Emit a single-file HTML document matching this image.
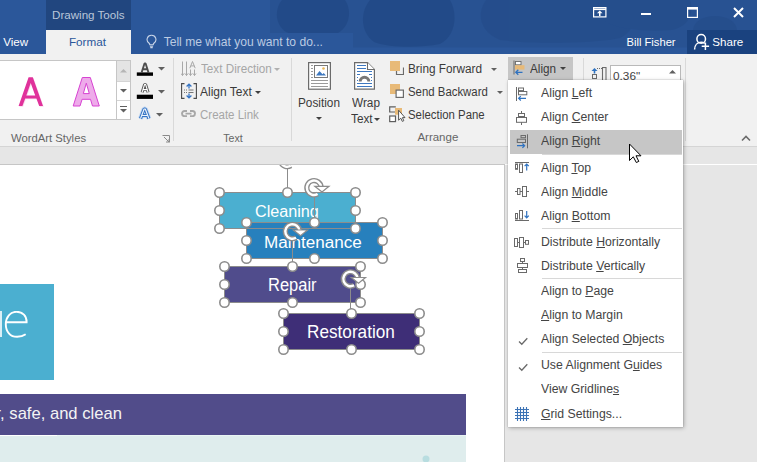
<!DOCTYPE html>
<html><head><meta charset="utf-8"><style>*{box-sizing:border-box;margin:0;padding:0}
html,body{width:757px;height:462px;overflow:hidden;background:#fff}
body{position:relative;font-family:"Liberation Sans",sans-serif;}
.a{position:absolute;white-space:nowrap}
u{text-decoration:underline;text-decoration-thickness:1px;text-underline-offset:1px}
</style></head><body>
<div class="a" style="left:0px;top:0px;width:757px;height:54px;background:#2b579a;"></div>
<svg class="a" style="left:0px;top:0px;" width="757" height="54" viewBox="0 0 757 54"><path d="M270 0H757V47.5H353V33H270Z" fill="#10254a" opacity="0.10"/><g fill="#163a72" opacity="0.3"><path d="M282 0H345C352 10 350 26 338 33C322 38 298 38 286 32C274 24 275 8 282 0Z"/><path d="M370 0H450C458 14 456 36 440 44C420 48 390 48 374 42C360 32 360 12 370 0Z"/></g><g fill="#163a72" opacity="0.16"><path d="M486 0H632C640 12 636 30 620 38C590 44 530 44 500 40C480 32 476 14 486 0Z"/><path d="M600 0H690C694 12 690 26 672 30C650 32 620 30 606 22C598 14 596 6 600 0Z"/><ellipse cx="715" cy="30" rx="22" ry="14"/></g></svg>
<div class="a" style="left:131px;top:33px;width:221px;height:15px;background:#2b579a;"></div>
<div class="a" style="left:46px;top:0px;width:85px;height:30px;background:#21467f;"></div>
<div class="a" style="left:51.75px;top:9.25px;font-size:11.63px;line-height:11.63px;color:#bac7da;transform:scaleX(0.9976);transform-origin:0 0;">Drawing Tools</div>
<div class="a" style="left:46px;top:30px;width:85px;height:24px;background:#f1f1f1;"></div>
<div class="a" style="left:68.94px;top:36.29px;font-size:11.70px;line-height:11.70px;color:#2b579a;">Format</div>
<div class="a" style="left:3.25px;top:36.38px;font-size:11.60px;line-height:11.60px;color:#ffffff;">View</div>
<svg class="a" style="left:146px;top:34px;" width="11" height="15" viewBox="0 0 11 15"><path d="M5.5 1.2a4.3 4.3 0 0 0-2.6 7.8c.6.5.9 1.1.9 1.8h3.4c0-.7.3-1.3.9-1.8A4.3 4.3 0 0 0 5.5 1.2z" fill="none" stroke="#c9d5e8" stroke-width="1.1"/><path d="M3.9 12.2h3.2M4.3 13.6h2.4" stroke="#c9d5e8" stroke-width="1.1"/></svg>
<div class="a" style="left:163.63px;top:36.25px;font-size:12.10px;line-height:12.10px;color:#bccbe2;">Tell me what you want to do...</div>
<svg class="a" style="left:593px;top:7px;" width="14" height="11" viewBox="0 0 14 11"><rect x="0.6" y="0.6" width="12.3" height="9.3" fill="none" stroke="#fff" stroke-width="1.2"/><path d="M0.6 2.3h12.3" stroke="#fff" stroke-width="1.6"/><path d="M6.75 9V5.5" stroke="#fff" stroke-width="1.5"/><path d="M4 6.3L6.75 3.6 9.5 6.3z" fill="#fff"/></svg>
<div class="a" style="left:641px;top:13px;width:10px;height:2px;background:#ffffff;"></div>
<svg class="a" style="left:687px;top:7px;" width="11" height="11" viewBox="0 0 11 11"><rect x="0.6" y="0.6" width="9.8" height="9.8" fill="none" stroke="#fff" stroke-width="1.2"/><path d="M0.6 1.8h9.8" stroke="#fff" stroke-width="1.6"/></svg>
<svg class="a" style="left:733px;top:7px;" width="11" height="11" viewBox="0 0 11 11"><path d="M1 1l9 9M10 1l-9 9" stroke="#fff" stroke-width="2"/></svg>
<div class="a" style="left:626.48px;top:36.52px;font-size:11.20px;line-height:11.20px;color:#ffffff;">Bill Fisher</div>
<div class="a" style="left:687px;top:30px;width:70px;height:24px;background:#1a427f;"></div>
<svg class="a" style="left:0px;top:0px;" width="757" height="54" viewBox="0 0 757 54"><circle cx="701.2" cy="38.9" r="4.3" fill="none" stroke="#fff" stroke-width="1.5"/><path d="M694.6 49.5c0-4.6 3-7.2 6.6-7.2 1.4 0 2.6.4 3.6 1" fill="none" stroke="#fff" stroke-width="1.5"/><path d="M705.4 42.6v7.4M701.7 46.3h7.4" stroke="#fff" stroke-width="1.5"/></svg>
<div class="a" style="left:712.27px;top:36.28px;font-size:11.60px;line-height:11.60px;color:#ffffff;">Share</div>
<div class="a" style="left:0px;top:54px;width:757px;height:92px;background:#f1f1f1;"></div>
<div class="a" style="left:0px;top:146px;width:757px;height:1px;background:#d5d5d5;"></div>
<div class="a" style="left:0px;top:147px;width:757px;height:17px;background:#e6e6e6;"></div>
<div class="a" style="left:0px;top:164px;width:505px;height:1px;background:#c6c6c6;"></div>
<div class="a" style="left:0px;top:60px;width:131px;height:60px;background:#ffffff;border:1px solid #c6c6c6;border-left:none"></div>
<div class="a" style="left:116px;top:61px;width:1px;height:58px;background:#c6c6c6;"></div>
<div class="a" style="left:117px;top:61px;width:13px;height:20px;background:#e4e4e4;"></div>
<div class="a" style="left:117px;top:81px;width:13px;height:1px;background:#d4d4d4;"></div>
<div class="a" style="left:117px;top:100px;width:13px;height:1px;background:#d4d4d4;"></div>
<svg class="a" style="left:120px;top:69px;" width="7" height="4" viewBox="0 0 7 4"><path d="M0 3.5L3.5 0 7 3.5z" fill="#b5b5b5"/></svg>
<svg class="a" style="left:120px;top:89px;" width="7" height="4" viewBox="0 0 7 4"><path d="M0 0h7L3.5 3.5z" fill="#606060"/></svg>
<svg class="a" style="left:120px;top:106px;" width="7" height="7" viewBox="0 0 7 7"><path d="M0 0.5h7" stroke="#606060" stroke-width="1"/><path d="M0 3h7L3.5 6.5z" fill="#606060"/></svg>
<svg class="a" style="left:0px;top:0px;" width="110" height="110" viewBox="0 0 110 110"><path fill-rule="evenodd" fill="#e0329b" d="M18.6 106L28.6 77.3H32.8L43 106H39.2L36.4 98.6H25.2L22.4 106ZM26.3 95.6L30.7 83L35.2 95.6Z" transform="translate(0.7 0.7)" opacity="0.18" /><path fill-rule="evenodd" fill="#e0329b" d="M18.6 106L28.6 77.3H32.8L43 106H39.2L36.4 98.6H25.2L22.4 106ZM26.3 95.6L30.7 83L35.2 95.6Z"/><path fill-rule="evenodd" fill="#eeabea" stroke="#d743d2" stroke-width="1" d="M73.2 106L82.3 77.5H90.3L99.3 106H92.5L90.5 99.3H82.1L80 106ZM83.3 93.6L86.3 83.2L89.3 93.6Z"/></svg>
<svg class="a" style="left:0px;top:0px;" width="160" height="125" viewBox="0 0 160 125"><path d="M141.7 72.2L144.5 63.5H145.6L148.4 72.2M142.9 69.3h4.3" fill="none" stroke="#4e4e4e" stroke-width="1.9" stroke-linejoin="bevel"/><rect x="136.8" y="72.4" width="16.2" height="3.4" fill="#000"/><path d="M142.1 92.4L144.6 84.4H145.6L148.1 92.4M143.3 89.6h3.6" fill="none" stroke="#555" stroke-width="3" stroke-linejoin="bevel"/><path d="M142.1 92.4L144.6 84.4H145.6L148.1 92.4M143.3 89.6h3.6" fill="none" stroke="#fff" stroke-width="1.1" stroke-linejoin="bevel"/><rect x="136.8" y="94.7" width="16.2" height="4.2" fill="#000"/><path d="M140.5 118.6L144.1 109H145.3L148.9 118.6M142.2 115.5h5" fill="none" stroke="#c6daf3" stroke-width="5" stroke-linejoin="bevel"/><path d="M140.5 118.6L144.1 109H145.3L148.9 118.6M142.2 115.5h5" fill="none" stroke="#3574c4" stroke-width="3.2" stroke-linejoin="bevel"/><path d="M140.5 118.6L144.1 109H145.3L148.9 118.6M142.2 115.5h5" fill="none" stroke="#eef4fb" stroke-width="1.2" stroke-linejoin="bevel"/></svg>
<svg class="a" style="left:158px;top:67px;" width="7" height="4" viewBox="0 0 7 4"><path d="M0 0h7L3.5 3.5z" fill="#606060"/></svg>
<svg class="a" style="left:158px;top:90px;" width="7" height="4" viewBox="0 0 7 4"><path d="M0 0h7L3.5 3.5z" fill="#606060"/></svg>
<svg class="a" style="left:156px;top:113px;" width="7" height="4" viewBox="0 0 7 4"><path d="M0 0h7L3.5 3.5z" fill="#606060"/></svg>
<div class="a" style="left:10.95px;top:132.73px;font-size:11.30px;line-height:11.30px;color:#666666;">WordArt Styles</div>
<svg class="a" style="left:162px;top:135px;" width="9" height="9" viewBox="0 0 9 9"><path d="M0.5 0.5h7v7" fill="none" stroke="#8a8a8a" stroke-width="1"/><path d="M2 2l5 5M4 7h3V4" fill="none" stroke="#8a8a8a" stroke-width="1"/></svg>
<div class="a" style="left:173px;top:58px;width:1px;height:83px;background:#d9d9d9;"></div>
<svg class="a" style="left:181px;top:61px;" width="16" height="16" viewBox="0 0 16 16"><g stroke="#a8a8a8" stroke-width="1" fill="none"><path d="M1.5 0.5v14M5.5 0.5v14M9.5 8.5v6M13.5 8.5v6"/><path d="M0 12.5l1.5 2 1.5-2M4 12.5l1.5 2 1.5-2M8 12.5l1.5 2 1.5-2M12 12.5l1.5 2 1.5-2"/><path d="M8.8 7.2L11.5 0.5 14.2 7.2M9.8 4.9h3.4"/></g></svg>
<div class="a" style="left:200.64px;top:61.62px;font-size:13.08px;line-height:13.08px;color:#a6a6a6;transform:scaleX(0.8944);transform-origin:0 0;">Text Direction</div>
<svg class="a" style="left:274px;top:68px;" width="6" height="3" viewBox="0 0 6 3"><path d="M0 0h6L3 3z" fill="#b0b0b0"/></svg>
<svg class="a" style="left:181px;top:83px;" width="16" height="16" viewBox="0 0 16 16"><g fill="none" stroke="#4a4a4a" stroke-width="1.1"><path d="M3.5 0.6H0.6v14.8H3.5M12.5 0.6h2.9v14.8H12.5"/></g><g stroke="#777" stroke-width="1"><path d="M3 7h1M5 7h1M7.5 7h5M3 9.5h1M5 9.5h1M7.5 9.5h5"/></g><g stroke="#3574c4" stroke-width="1.3" fill="none"><path d="M8 1.2v4.3M5.6 3.5L8 1.1l2.4 2.4M8 10.5v4.3M5.6 12.5L8 14.9l2.4-2.4"/></g></svg>
<div class="a" style="left:200.48px;top:84.62px;font-size:13.08px;line-height:13.08px;color:#3a3a3a;transform:scaleX(0.9173);transform-origin:0 0;">Align Text</div>
<svg class="a" style="left:255px;top:91px;" width="6" height="3" viewBox="0 0 6 3"><path d="M0 0h6L3 3z" fill="#404040"/></svg>
<svg class="a" style="left:181px;top:110px;" width="15" height="7" viewBox="0 0 15 7"><g fill="none" stroke="#a8a8a8" stroke-width="1.9"><path d="M6 1H3.6a2.6 2.6 0 0 0 0 5.2H6M9 1h2.4a2.6 2.6 0 0 1 0 5.2H9M4.5 3.6h6"/></g></svg>
<div class="a" style="left:199.92px;top:108.22px;font-size:13.08px;line-height:13.08px;color:#a6a6a6;transform:scaleX(0.8791);transform-origin:0 0;">Create Link</div>
<div class="a" style="left:223.26px;top:132.92px;font-size:10.60px;line-height:10.60px;color:#666666;">Text</div>
<div class="a" style="left:291px;top:58px;width:1px;height:83px;background:#d9d9d9;"></div>
<svg class="a" style="left:308px;top:62px;" width="24" height="28" viewBox="0 0 24 28"><rect x="0.6" y="0.6" width="21.8" height="26.6" fill="#fff" stroke="#6b6b6b" stroke-width="1.2"/><rect x="6.5" y="3.5" width="13" height="12" fill="#fff" stroke="#7a7a7a" stroke-width="1"/><path d="M8 13.5l3.5-4.5 3 3.2 1.2-1.3 2.3 2.6z" fill="#3d78c0"/><circle cx="15.5" cy="6.5" r="1.3" fill="#e8b658"/><g stroke="#9a9a9a" stroke-width="1"><path d="M3 3.5h2M3 6.5h2M3 9.5h2M3 12.5h2M3 15.5h2M3 18.5h17M3 21.5h17M3 24.5h17"/></g></svg>
<div class="a" style="left:298.03px;top:96.42px;font-size:13.08px;line-height:13.08px;color:#3a3a3a;transform:scaleX(0.9020);transform-origin:0 0;">Position</div>
<svg class="a" style="left:316px;top:117px;" width="6" height="3" viewBox="0 0 6 3"><path d="M0 0h6L3 3z" fill="#404040"/></svg>
<svg class="a" style="left:354px;top:62px;" width="21" height="28" viewBox="0 0 21 28"><path d="M0.6 0.6H13.5L20.4 7.5V27.2H0.6Z" fill="#fff" stroke="#6b6b6b" stroke-width="1.2"/><path d="M13.5 0.6V7.5H20.4" fill="#fff" stroke="#6b6b6b" stroke-width="1.1"/><g stroke="#3e78c0" stroke-width="1"><path d="M3 3.5h9M3 6.5h9M3 9.5h15M3 12.5h3M15 12.5h3M3 21.5h15M3 24.5h15"/><path d="M3 15.5h1M3 18.5h1M17 15.5h1M17 18.5h1"/></g><path d="M6.2 19.5a4.3 4.3 0 0 1 8.6 0" fill="none" stroke="#777" stroke-width="3"/></svg>
<div class="a" style="left:351.65px;top:96.42px;font-size:13.08px;line-height:13.08px;color:#3a3a3a;transform:scaleX(0.9020);transform-origin:0 0;">Wrap</div>
<div class="a" style="left:350.83px;top:112.32px;font-size:13.08px;line-height:13.08px;color:#3a3a3a;transform:scaleX(0.9020);transform-origin:0 0;">Text</div>
<svg class="a" style="left:374px;top:118px;" width="6" height="3" viewBox="0 0 6 3"><path d="M0 0h6L3 3z" fill="#404040"/></svg>
<svg class="a" style="left:390px;top:61px;" width="14" height="14" viewBox="0 0 14 14"><path d="M6.5 6.5v7h7v-7" fill="none" stroke="#6b6b6b" stroke-width="1.2"/><rect x="0" y="0" width="10" height="10" fill="#e8ba78"/></svg>
<div class="a" style="left:407.83px;top:61.62px;font-size:13.08px;line-height:13.08px;color:#3a3a3a;transform:scaleX(0.9020);transform-origin:0 0;">Bring Forward</div>
<svg class="a" style="left:491px;top:68px;" width="6" height="3" viewBox="0 0 6 3"><path d="M0 0h6L3 3z" fill="#606060"/></svg>
<svg class="a" style="left:390px;top:84px;" width="14" height="14" viewBox="0 0 14 14"><rect x="0" y="0" width="10" height="10" fill="#e8ba78"/><rect x="6.1" y="6.1" width="7.3" height="7.3" fill="#fff" stroke="#6b6b6b" stroke-width="1.2"/></svg>
<div class="a" style="left:408.28px;top:84.62px;font-size:13.08px;line-height:13.08px;color:#3a3a3a;transform:scaleX(0.8715);transform-origin:0 0;">Send Backward</div>
<svg class="a" style="left:497px;top:91px;" width="6" height="3" viewBox="0 0 6 3"><path d="M0 0h6L3 3z" fill="#606060"/></svg>
<svg class="a" style="left:0px;top:0px;" width="420" height="130" viewBox="0 0 420 130"><g fill="none" stroke="#5e5e5e" stroke-width="1.2"><path d="M395.8 106.8H389.7V112H395.8"/><rect x="389.7" y="116" width="5.8" height="5.6" fill="#fff"/></g><rect x="395" y="108" width="7" height="6.7" fill="#e8ba78"/><path d="M398.6 110.2V120.2L400.8 118.2L402.3 121.4L403.8 120.7L402.4 117.6H405Z" fill="#fff" stroke="#555" stroke-width="1" stroke-linejoin="round"/></svg>
<div class="a" style="left:408.28px;top:108.02px;font-size:13.08px;line-height:13.08px;color:#3a3a3a;transform:scaleX(0.8715);transform-origin:0 0;">Selection Pane</div>
<div class="a" style="left:417.38px;top:132.16px;font-size:11.50px;line-height:11.50px;color:#666666;">Arrange</div>
<div class="a" style="left:508px;top:57px;width:65px;height:24px;background:#c6c6c6;"></div>
<svg class="a" style="left:513px;top:60px;" width="13" height="16" viewBox="0 0 13 16"><path d="M1 0.5v14" stroke="#6b6b6b" stroke-width="1"/><rect x="2.5" y="1.5" width="5.5" height="3.3" fill="#fff" stroke="#6b6b6b" stroke-width="0.9"/><rect x="2" y="5.2" width="9.5" height="4.4" fill="#e8ba78"/><path d="M9.5 12.3H2.8M5.3 9.8L2.8 12.3l2.5 2.5" fill="none" stroke="#2f72c0" stroke-width="1.3"/></svg>
<div class="a" style="left:530.38px;top:61.62px;font-size:13.08px;line-height:13.08px;color:#3a3a3a;transform:scaleX(0.8944);transform-origin:0 0;">Align</div>
<svg class="a" style="left:560px;top:67px;" width="6" height="3" viewBox="0 0 6 3"><path d="M0 0h6L3 3z" fill="#404040"/></svg>
<div class="a" style="left:583px;top:58px;width:1px;height:83px;background:#d9d9d9;"></div>
<svg class="a" style="left:591px;top:67px;" width="16" height="14" viewBox="0 0 16 14"><path d="M3.5 6.5V3" stroke="#2f72c0" stroke-width="1.6"/><path d="M0.5 4L3.5 1 6.5 4z" fill="#2f72c0"/><rect x="1.5" y="7.5" width="4" height="4" fill="none" stroke="#6b6b6b" stroke-width="1"/><path d="M6 1.5h5" stroke="#6b6b6b" stroke-dasharray="1 1"/><rect x="11.5" y="0.5" width="3.5" height="13" fill="none" stroke="#6b6b6b" stroke-width="1.1"/></svg>
<div class="a" style="left:610px;top:65px;width:71px;height:20px;background:#ffffff;border:1px solid #b9b9b9"></div>
<div class="a" style="left:613.04px;top:71.11px;font-size:11.80px;line-height:11.80px;color:#444;">0.36&quot;</div>
<svg class="a" style="left:669px;top:70px;" width="7" height="4" viewBox="0 0 7 4"><path d="M0 3.5L3.5 0 7 3.5z" fill="#606060"/></svg>
<div class="a" style="left:685px;top:58px;width:1px;height:83px;background:#d9d9d9;"></div>
<svg class="a" style="left:741px;top:135px;" width="10" height="7" viewBox="0 0 10 7"><path d="M1 5.5L5 1.5 9 5.5" fill="none" stroke="#6b6b6b" stroke-width="1.6"/></svg>
<div class="a" style="left:504px;top:164px;width:1px;height:298px;background:#c6c6c6;"></div>
<div class="a" style="left:505px;top:165px;width:252px;height:297px;background:#e6e6e6;"></div>
<div class="a" style="left:0px;top:284px;width:54px;height:96px;background:#4bafd0;"></div>
<svg class="a" style="left:0px;top:310.5px;" width="30" height="28" viewBox="0 0 30 28"><path d="M1 0v26" stroke="#fff" stroke-width="1.6"/><path d="M6.3 11.3H26.6C26.8 4.8 22.6 0.8 16.6 0.8 10.3 0.8 5.8 6 5.8 13.2c0 7.4 4.4 12.6 11.3 12.6 3.5 0 6.3-1 8.6-2.6" fill="none" stroke="#fff" stroke-width="1.9"/></svg>
<div class="a" style="left:0px;top:394px;width:466px;height:41px;background:#514c8a;"></div>
<div class="a" style="left:-4.5px;top:406.44px;font-size:16.60px;line-height:16.60px;color:#f4f4f4;">r, safe, and clean</div>
<div class="a" style="left:0px;top:435px;width:466px;height:27px;background:#dfeded;"></div>
<div class="a" style="left:0px;top:435px;width:57px;height:1px;background:#ffffff;"></div>
<div class="a" style="left:57px;top:435px;width:409px;height:1px;background:#e9f4f4;"></div>
<svg class="a" style="left:422px;top:455px;" width="8" height="8" viewBox="0 0 8 8"><circle cx="4" cy="4" r="3.5" fill="#b8dde0"/></svg>
<div class="a" style="left:219px;top:192px;width:137px;height:36px;background:#4bafd0;"></div>
<div class="a" style="left:255.18px;top:203.09px;font-size:16.42px;line-height:16.42px;color:#ffffff;transform:scaleX(0.9863);transform-origin:0 0;">Cleaning</div>
<div class="a" style="left:246px;top:222px;width:137px;height:36px;background:#2780bd;"></div>
<div class="a" style="left:264.4px;top:233.66px;font-size:17.30px;line-height:17.30px;color:#ffffff;transform:scaleX(0.9886);transform-origin:0 0;">Maintenance</div>
<div class="a" style="left:225px;top:266px;width:136px;height:36px;background:#504c8c;"></div>
<div class="a" style="left:268.35px;top:276.53px;font-size:17.44px;line-height:17.44px;color:#ffffff;transform:scaleX(0.9460);transform-origin:0 0;">Repair</div>
<div class="a" style="left:283px;top:313px;width:136px;height:36px;background:#3e2e77;"></div>
<div class="a" style="left:306.59px;top:323.89px;font-size:17.73px;line-height:17.73px;color:#ffffff;transform:scaleX(0.9700);transform-origin:0 0;">Restoration</div>
<svg class="a" style="left:0px;top:0px;" width="504" height="462" viewBox="0 0 504 462"><g fill="none" stroke="#8c8c8c" stroke-width="1"><rect x="219.5" y="192.5" width="136.0" height="36.0"/></g><g fill="none" stroke="#8c8c8c" stroke-width="1"><rect x="246.5" y="222.5" width="136.0" height="36.0"/></g><g fill="none" stroke="#8c8c8c" stroke-width="1"><rect x="224.5" y="266.5" width="136.0" height="36.0"/></g><g fill="none" stroke="#8c8c8c" stroke-width="1"><rect x="283.5" y="313.5" width="136.0" height="36.0"/></g><path d="M287.5 168V192.5M314.5 196V222.5M292.5 240V266.5M350.5 288V313.5" stroke="#8c8c8c" stroke-width="1"/><circle cx="219.5" cy="192.5" r="4.7" fill="#fff" stroke="#8c8c8c" stroke-width="1.6"/><circle cx="287.5" cy="192.5" r="4.7" fill="#fff" stroke="#8c8c8c" stroke-width="1.6"/><circle cx="355.5" cy="192.5" r="4.7" fill="#fff" stroke="#8c8c8c" stroke-width="1.6"/><circle cx="219.5" cy="210.5" r="4.7" fill="#fff" stroke="#8c8c8c" stroke-width="1.6"/><circle cx="355.5" cy="210.5" r="4.7" fill="#fff" stroke="#8c8c8c" stroke-width="1.6"/><circle cx="219.5" cy="228.5" r="4.7" fill="#fff" stroke="#8c8c8c" stroke-width="1.6"/><circle cx="355.5" cy="228.5" r="4.7" fill="#fff" stroke="#8c8c8c" stroke-width="1.6"/><circle cx="246.5" cy="222.5" r="4.7" fill="#fff" stroke="#8c8c8c" stroke-width="1.6"/><circle cx="314.5" cy="222.5" r="4.7" fill="#fff" stroke="#8c8c8c" stroke-width="1.6"/><circle cx="382.5" cy="222.5" r="4.7" fill="#fff" stroke="#8c8c8c" stroke-width="1.6"/><circle cx="246.5" cy="240.5" r="4.7" fill="#fff" stroke="#8c8c8c" stroke-width="1.6"/><circle cx="382.5" cy="240.5" r="4.7" fill="#fff" stroke="#8c8c8c" stroke-width="1.6"/><circle cx="246.5" cy="258.5" r="4.7" fill="#fff" stroke="#8c8c8c" stroke-width="1.6"/><circle cx="314.5" cy="258.5" r="4.7" fill="#fff" stroke="#8c8c8c" stroke-width="1.6"/><circle cx="382.5" cy="258.5" r="4.7" fill="#fff" stroke="#8c8c8c" stroke-width="1.6"/><circle cx="224.5" cy="266.5" r="4.7" fill="#fff" stroke="#8c8c8c" stroke-width="1.6"/><circle cx="292.5" cy="266.5" r="4.7" fill="#fff" stroke="#8c8c8c" stroke-width="1.6"/><circle cx="360.5" cy="266.5" r="4.7" fill="#fff" stroke="#8c8c8c" stroke-width="1.6"/><circle cx="224.5" cy="284.5" r="4.7" fill="#fff" stroke="#8c8c8c" stroke-width="1.6"/><circle cx="360.5" cy="284.5" r="4.7" fill="#fff" stroke="#8c8c8c" stroke-width="1.6"/><circle cx="224.5" cy="302.5" r="4.7" fill="#fff" stroke="#8c8c8c" stroke-width="1.6"/><circle cx="292.5" cy="302.5" r="4.7" fill="#fff" stroke="#8c8c8c" stroke-width="1.6"/><circle cx="360.5" cy="302.5" r="4.7" fill="#fff" stroke="#8c8c8c" stroke-width="1.6"/><circle cx="283.5" cy="313.5" r="4.7" fill="#fff" stroke="#8c8c8c" stroke-width="1.6"/><circle cx="351.5" cy="313.5" r="4.7" fill="#fff" stroke="#8c8c8c" stroke-width="1.6"/><circle cx="419.5" cy="313.5" r="4.7" fill="#fff" stroke="#8c8c8c" stroke-width="1.6"/><circle cx="283.5" cy="331.5" r="4.7" fill="#fff" stroke="#8c8c8c" stroke-width="1.6"/><circle cx="419.5" cy="331.5" r="4.7" fill="#fff" stroke="#8c8c8c" stroke-width="1.6"/><circle cx="283.5" cy="349.5" r="4.7" fill="#fff" stroke="#8c8c8c" stroke-width="1.6"/><circle cx="351.5" cy="349.5" r="4.7" fill="#fff" stroke="#8c8c8c" stroke-width="1.6"/><circle cx="419.5" cy="349.5" r="4.7" fill="#fff" stroke="#8c8c8c" stroke-width="1.6"/><path d="M290.90000000000003 165.7A7.2 7.2 0 1 1 294.47 158.9" fill="none" stroke="#8c8c8c" stroke-width="5.2"/><path d="M290.90000000000003 165.7A7.2 7.2 0 1 1 294.47 158.9" fill="none" stroke="#fff" stroke-width="2.4"/><path d="M288.1 158.0L302.3 158.0L295.3 163.7Z" fill="#fff" stroke="#8c8c8c" stroke-width="1.2" stroke-linejoin="miter"/><path d="M317.6 194.0A7.2 7.2 0 1 1 321.17 187.20000000000002" fill="none" stroke="#8c8c8c" stroke-width="5.2"/><path d="M317.6 194.0A7.2 7.2 0 1 1 321.17 187.20000000000002" fill="none" stroke="#fff" stroke-width="2.4"/><path d="M314.8 186.3L329 186.3L322 192.0Z" fill="#fff" stroke="#8c8c8c" stroke-width="1.2" stroke-linejoin="miter"/><path d="M296.1 237.7A7.2 7.2 0 1 1 299.67 230.9" fill="none" stroke="#8c8c8c" stroke-width="5.2"/><path d="M296.1 237.7A7.2 7.2 0 1 1 299.67 230.9" fill="none" stroke="#fff" stroke-width="2.4"/><path d="M293.3 230.0L307.5 230.0L300.5 235.7Z" fill="#fff" stroke="#8c8c8c" stroke-width="1.2" stroke-linejoin="miter"/><path d="M354.1 285.2A7.2 7.2 0 1 1 357.67 278.4" fill="none" stroke="#8c8c8c" stroke-width="5.2"/><path d="M354.1 285.2A7.2 7.2 0 1 1 357.67 278.4" fill="none" stroke="#fff" stroke-width="2.4"/><path d="M351.3 277.5L365.5 277.5L358.5 283.2Z" fill="#fff" stroke="#8c8c8c" stroke-width="1.2" stroke-linejoin="miter"/></svg>
<div class="a" style="left:0px;top:147px;width:504px;height:17px;background:#e6e6e6;"></div>
<div class="a" style="left:0px;top:164px;width:504px;height:1px;background:#c6c6c6;"></div>
<div class="a" style="left:508px;top:80px;width:175px;height:347px;background:#ffffff;box-shadow:1px 1px 4px rgba(0,0,0,0.28),0 0 1px rgba(0,0,0,0.35)"></div>
<div class="a" style="left:510px;top:130px;width:172px;height:24px;background:#c6c6c6;"></div>
<div class="a" style="left:541px;top:87.42px;font-size:12.50px;line-height:12.50px;color:#444444;transform:scaleX(0.9800);transform-origin:0 0;">Align <u>L</u>eft</div>
<div class="a" style="left:541px;top:111.42px;font-size:12.50px;line-height:12.50px;color:#444444;transform:scaleX(0.9800);transform-origin:0 0;">Align <u>C</u>enter</div>
<div class="a" style="left:541px;top:135.42px;font-size:12.50px;line-height:12.50px;color:#444444;transform:scaleX(0.9800);transform-origin:0 0;">Align <u>R</u>ight</div>
<div class="a" style="left:541px;top:161.62px;font-size:12.50px;line-height:12.50px;color:#444444;transform:scaleX(0.9800);transform-origin:0 0;">Align <u>T</u>op</div>
<div class="a" style="left:541px;top:185.62px;font-size:12.50px;line-height:12.50px;color:#444444;transform:scaleX(0.9800);transform-origin:0 0;">Align <u>M</u>iddle</div>
<div class="a" style="left:541px;top:209.62px;font-size:12.50px;line-height:12.50px;color:#444444;transform:scaleX(0.9800);transform-origin:0 0;">Align <u>B</u>ottom</div>
<div class="a" style="left:541px;top:235.72px;font-size:12.50px;line-height:12.50px;color:#444444;transform:scaleX(0.9800);transform-origin:0 0;">Distribute <u>H</u>orizontally</div>
<div class="a" style="left:541px;top:259.52px;font-size:12.50px;line-height:12.50px;color:#444444;transform:scaleX(0.9800);transform-origin:0 0;">Distribute <u>V</u>ertically</div>
<div class="a" style="left:541px;top:284.92px;font-size:12.50px;line-height:12.50px;color:#444444;transform:scaleX(0.9800);transform-origin:0 0;">Align to <u>P</u>age</div>
<div class="a" style="left:541px;top:309.42px;font-size:12.50px;line-height:12.50px;color:#444444;transform:scaleX(0.9800);transform-origin:0 0;"><u>A</u>lign to Margin</div>
<div class="a" style="left:541px;top:333.42px;font-size:12.50px;line-height:12.50px;color:#444444;transform:scaleX(0.9800);transform-origin:0 0;">Align Selected <u>O</u>bjects</div>
<div class="a" style="left:541px;top:359.42px;font-size:12.50px;line-height:12.50px;color:#444444;transform:scaleX(0.9800);transform-origin:0 0;">Use Alignment G<u>u</u>ides</div>
<div class="a" style="left:541px;top:383.42px;font-size:12.50px;line-height:12.50px;color:#444444;transform:scaleX(0.9800);transform-origin:0 0;">View Gridline<u>s</u></div>
<div class="a" style="left:541px;top:407.62px;font-size:12.50px;line-height:12.50px;color:#444444;transform:scaleX(0.9800);transform-origin:0 0;"><u>G</u>rid Settings...</div>
<div class="a" style="left:542px;top:154px;width:140px;height:1px;background:#d8d8d8;"></div>
<div class="a" style="left:542px;top:228px;width:140px;height:1px;background:#d8d8d8;"></div>
<div class="a" style="left:542px;top:278px;width:140px;height:1px;background:#d8d8d8;"></div>
<div class="a" style="left:542px;top:352px;width:140px;height:1px;background:#d8d8d8;"></div>
<svg class="a" style="left:0px;top:0px;" width="757" height="462" viewBox="0 0 757 462"><path d="M516.5 87v14" stroke="#6a6a6a" stroke-width="1"/><rect x="518.5" y="88" width="5" height="2.6" fill="none" stroke="#6a6a6a" stroke-width="1"/><rect x="518.5" y="91.5" width="8.3" height="3.3" fill="none" stroke="#6a6a6a" stroke-width="1"/><path d="M526 98.3H518.6M520.8 96.1l-2.2 2.2 2.2 2.2" fill="none" stroke="#2f72c0" stroke-width="1.2"/><path d="M521.5 111v14" stroke="#6a6a6a" stroke-width="1"/><rect x="518.5" y="113.5" width="6" height="3" fill="#fff" stroke="#6a6a6a" stroke-width="1"/><rect x="516.5" y="117.5" width="10" height="4.8" fill="#fff" stroke="#6a6a6a" stroke-width="1"/><path d="M527.5 134.3v14" stroke="#6a6a6a" stroke-width="1"/><rect x="521" y="135.5" width="4.5" height="2.2" fill="none" stroke="#6a6a6a" stroke-width="1"/><rect x="517.3" y="139.2" width="8.2" height="3.3" fill="none" stroke="#6a6a6a" stroke-width="1"/><path d="M517 145.7H524.6M522.4 143.5l2.2 2.2-2.2 2.2" fill="none" stroke="#2f72c0" stroke-width="1.2"/><path d="M515 162.5h14" stroke="#6a6a6a" stroke-width="1"/><rect x="515.5" y="164" width="2" height="5.3" fill="none" stroke="#6a6a6a" stroke-width="1"/><rect x="519.5" y="164" width="3" height="8.5" fill="none" stroke="#6a6a6a" stroke-width="1"/><path d="M526.7 170.5v-6.5M524.6 166.1l2.1-2.1 2.1 2.1" fill="none" stroke="#2f72c0" stroke-width="1.2"/><path d="M515 191.5h2.5M520 191.5h2.5M526.5 191.5h2.5" stroke="#6a6a6a" stroke-width="1"/><rect x="517.5" y="188.5" width="2.5" height="6" fill="none" stroke="#6a6a6a" stroke-width="1"/><rect x="522.5" y="186.5" width="4" height="10" fill="none" stroke="#6a6a6a" stroke-width="1"/><path d="M515 220.5h14" stroke="#6a6a6a" stroke-width="1"/><rect x="515.5" y="213.5" width="2" height="5.5" fill="none" stroke="#6a6a6a" stroke-width="1"/><rect x="519.5" y="210.5" width="3" height="8.5" fill="none" stroke="#6a6a6a" stroke-width="1"/><path d="M526.7 211v6.8M524.6 215.7l2.1 2.1 2.1-2.1" fill="none" stroke="#2f72c0" stroke-width="1.2"/><rect x="514.5" y="238.5" width="3" height="8" fill="none" stroke="#6a6a6a" stroke-width="1"/><rect x="519.5" y="237.5" width="4" height="10" fill="none" stroke="#6a6a6a" stroke-width="1"/><rect x="525.5" y="240.5" width="3" height="3.8" fill="none" stroke="#6a6a6a" stroke-width="1"/><path d="M517.5 242.5h2M523.5 242.5h2" stroke="#6a6a6a" stroke-width="1"/><rect x="520.5" y="258.5" width="4" height="3" fill="none" stroke="#6a6a6a" stroke-width="1"/><rect x="517.5" y="263.5" width="10" height="4" fill="none" stroke="#6a6a6a" stroke-width="1"/><rect x="518.5" y="269.5" width="8" height="3" fill="none" stroke="#6a6a6a" stroke-width="1"/><path d="M522.5 261.5v2M522.5 267.5v2" stroke="#6a6a6a" stroke-width="1"/><path d="M519 341.5l2.8 2.8 5.5-6" fill="none" stroke="#6a6a6a" stroke-width="1.3"/><path d="M519 367.5l2.8 2.8 5.5-6" fill="none" stroke="#6a6a6a" stroke-width="1.3"/><g stroke="#3c73b5" stroke-width="1.1"><path d="M517.5 407v14M520.5 407v14M523.5 407v14M526.5 407v14M515 409.5h14M515 412.5h14M515 415.5h14M515 418.5h14"/></g></svg>
<svg class="a" style="left:0px;top:0px;" width="757" height="462" viewBox="0 0 757 462"><path d="M629.5 144V160.5L633.3 156.8L636.3 162.5L638.8 161.4L636 155.8H641Z" fill="#fff" stroke="#000" stroke-width="1" stroke-linejoin="miter"/></svg>
</body></html>
